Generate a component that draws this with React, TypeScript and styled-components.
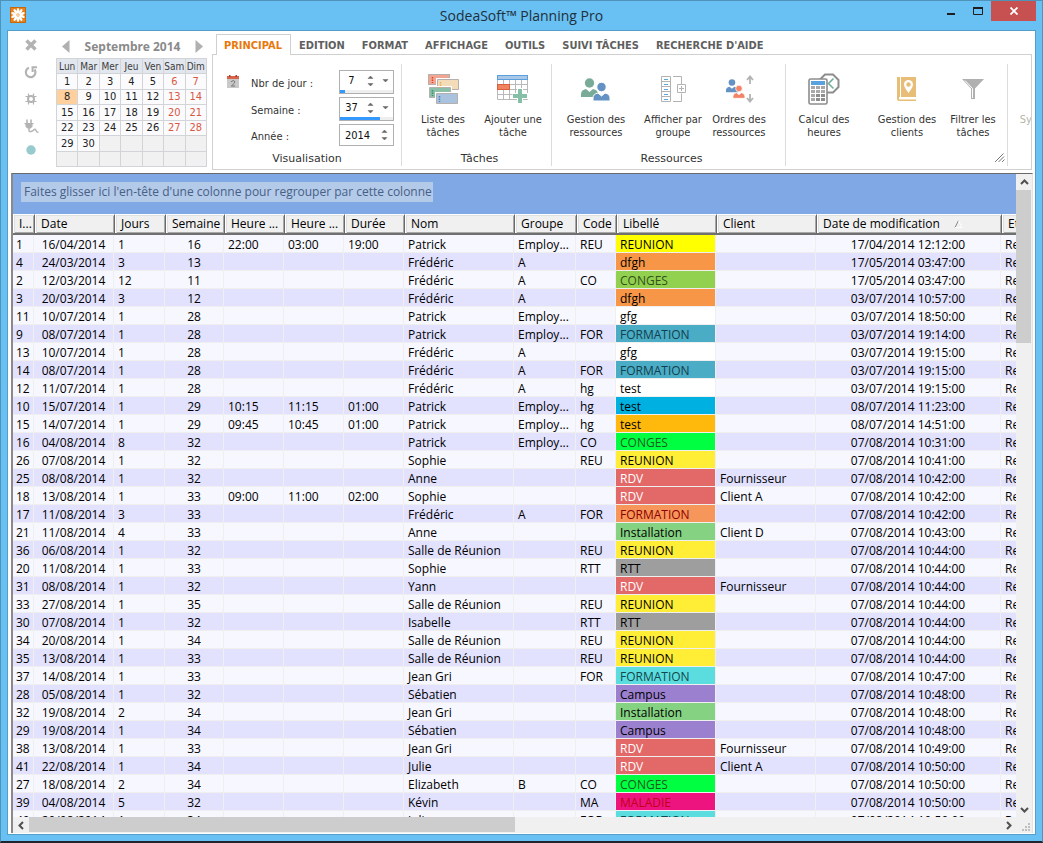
import React from "react";
import styled, { createGlobalStyle } from "styled-components";

const UI_FONT = '"DejaVu Sans Condensed", "DejaVu Sans", sans-serif';
const GRID_FONT = '"Open Sans", "Noto Sans", sans-serif';

const GlobalStyle = createGlobalStyle`
  *, *::before, *::after { box-sizing: border-box; }
  body { margin: 0; background: #20242c; font-family: ${UI_FONT}; font-size: 11px; color: #333; }
  button, input { font: inherit; color: inherit; margin: 0; padding: 0; border: 0; background: none; }
  button { cursor: pointer; }
  svg { display: block; flex: none; }
`;

/* ---------- window frame ---------- */

const Window = styled.div`
  display: flex;
  flex-direction: column;
  height: 100vh;
  min-height: 400px;
  border: 1px solid #4f93b8;
  border-bottom: 2px solid #20242c;
  background: #69c0f2;
`;

const TitleBar = styled.header`
  display: flex;
  align-items: flex-start;
  height: 29px;
  flex: none;
  padding-left: 9px;
`;

const AppIcon = styled.div`
  padding-top: 6px;
  width: 96px;
`;

const Title = styled.h1`
  flex: 1;
  margin: 0;
  text-align: center;
  font: 400 14px/29px ${GRID_FONT};
  color: #1f2f3a;
`;

const WindowButtons = styled.div`
  display: flex;
  width: 100px;
  margin-right: 5px;
`;

const WindowButton = styled.button<{ $close?: boolean }>`
  display: flex;
  align-items: center;
  justify-content: center;
  height: 20px;
  width: ${(p) => (p.$close ? 45 : 27)}px;
  background: ${(p) => (p.$close ? "#c75050" : "transparent")};
`;

const Client = styled.main`
  display: flex;
  flex-direction: column;
  flex: 1;
  min-height: 0;
  margin: 0 6px 6px;
  border: 1px solid #539fc9;
  background: #fff;
`;

/* ---------- top area ---------- */

const TopArea = styled.div`
  display: flex;
  height: 142px;
  flex: none;
  padding-right: 3px;
`;

const SideTools = styled.nav`
  display: flex;
  flex-direction: column;
  align-items: center;
  width: 46px;
  padding-top: 6px;
  gap: 11px;
`;

const ToolButton = styled.button`
  display: flex;
  align-items: center;
  justify-content: center;
  width: 16px;
  height: 16px;
`;

const MonthPanel = styled.section`
  width: 151px;
  margin: 3px 5px 0 2px;
`;

const MonthNav = styled.div`
  display: flex;
  align-items: center;
  justify-content: space-between;
  height: 24px;
  padding: 0 4px 0 6px;
`;

const MonthName = styled.span`
  padding-top: 2px;
  font: 700 12px/24px "Noto Sans", sans-serif;
  color: #8a8a8a;
`;

const MonthTable = styled.table`
  width: 151px;
  height: 109px;
  border-collapse: collapse;
  table-layout: fixed;
  line-height: 13px;
  text-align: center;

  th, td {
    height: 15px;
    padding: 0;
    border: 1px solid #d2d4d8;
    font-weight: 400;
    white-space: nowrap;
  }
  th { background: #e2e6ee; color: #3c3c3c; font-size: 10px; }
`;

const Day = styled.td<{ $weekend: boolean; $today: boolean; $empty: boolean }>`
  color: ${(p) => (p.$weekend ? "#d9583f" : "#222")};
  background: ${(p) => (p.$today ? "#ffcf9d" : p.$empty ? "#f1f1f1" : "#fbfbfe")};
`;

const Ribbon = styled.section`
  flex: 1;
  min-width: 0;
  display: flex;
  flex-direction: column;
  padding-top: 3px;
`;

const Tabs = styled.div`
  display: flex;
  padding-left: 4px;
  height: 21px;
  flex: none;
`;

const Tab = styled.button<{ $active?: boolean }>`
  height: 21px;
  padding: 2px 8px 0 7px;
  position: relative;
  z-index: 1;
  font-weight: 700;
  line-height: 18px;
  white-space: nowrap;
  color: ${(p) => (p.$active ? "#e8790c" : "#5f5f5f")};
  background: ${(p) => (p.$active ? "#fff" : "transparent")};
  border: 1px solid ${(p) => (p.$active ? "#d0d0d0" : "transparent")};
  border-bottom: 0;
`;

const RibbonPanel = styled.div`
  display: flex;
  height: 116px;
  margin-top: -1px;
  border: 1px solid #d0d0d0;
  padding: 9px 0 3px;
  overflow: hidden;
`;

const Group = styled.section<{ $width?: number; $indent?: number }>`
  display: flex;
  flex-direction: column;
  justify-content: space-between;
  flex: ${(p) => (p.$width ? `0 0 ${p.$width}px` : "1 0 0")};
  padding-left: ${(p) => p.$indent ?? 0}px;
  border-right: ${(p) => (p.$width ? "1px solid #dcdcdc" : "0")};
`;

const GroupTitle = styled.h2`
  margin: 0;
  font-size: 11px;
  font-weight: 400;
  line-height: 14px;
  text-align: center;
  font-family: "DejaVu Sans", sans-serif;
`;

const GroupItems = styled.div`
  display: flex;
  padding-top: 9px;
`;

const BigButton = styled.button<{ $width: number; $muted?: boolean }>`
  display: flex;
  flex-direction: column;
  align-items: center;
  gap: 8px;
  flex: none;
  width: ${(p) => p.$width}px;
  line-height: 13px;
  color: ${(p) => (p.$muted ? "#b5b5a8" : "#333")};
  white-space: pre;
`;

const LauncherRow = styled.div`
  display: flex;
  justify-content: flex-end;
  height: 14px;
  padding-right: 2px;
`;

const Launcher = styled.button`
  width: 11px;
  height: 12px;
`;

const Fields = styled.div`
  display: grid;
  grid-template-columns: 12px 1fr 55px;
  column-gap: 12px;
  row-gap: 3px;
  align-items: center;
  padding: 6px 7px 0 14px;
`;

const FieldLabel = styled.label`
  grid-column: 2;
  padding-top: 2px;
`;

const SpinBox = styled.div`
  grid-column: 3;
  border: 1px solid #b0b0b0;
  background: #fff;
`;

const SpinLine = styled.div<{ $tall: boolean }>`
  display: flex;
  align-items: center;
  height: ${(p) => (p.$tall ? 20 : 19)}px;
`;

const SpinInput = styled.input<{ $wide?: boolean }>`
  width: ${(p) => (p.$wide ? 35 : 23)}px;
  text-align: center;
  color: #111;
`;

const SpinArrows = styled.span`
  display: flex;
  flex-direction: column;
  gap: 4px;
  margin: 0 auto;
`;

const ArrowButton = styled.button`
  display: block;
  width: 7px;
  height: 4px;
`;

const Gauge = styled.div`
  height: 3px;
  background: #eee;
`;

const GaugeFill = styled.div`
  height: 3px;
  background: #3399ff;
`;

/* ---------- data grid ---------- */

const GridFrame = styled.section`
  display: grid;
  grid-template-columns: 1fr 16px;
  grid-template-rows: 1fr 16px;
  flex: 1;
  min-height: 0;
  margin: 0 2px 1px 3px;
  border-top: 1px solid #696969;
  border-left: 2px solid #8a8a8a;
  border-right: 1px solid #e3e3e3;
  background: #f0f0f0;
  font-family: ${GRID_FONT};
  font-size: 12px;
`;

const GridView = styled.div`
  min-width: 0;
  min-height: 0;
  overflow: hidden;
  background: #fff;
`;

const GroupBar = styled.div`
  height: 40px;
  padding: 8px;
  background: #80a8e4;
`;

const GroupHint = styled.span`
  display: inline-block;
  padding: 0 1px 0 3px;
  line-height: 20px;
  white-space: nowrap;
  color: #466086;
  background: #b4cae9;
`;

const DataTable = styled.table`
  width: 1102px;
  min-width: 100%;
  table-layout: fixed;
  border-collapse: separate;
  border-spacing: 0;
`;

const HeadCell = styled.th`
  height: 21px;
  padding: 0 1px 1px 6px;
  text-align: left;
  font-weight: 400;
  line-height: 16px;
  color: #000;
  background: #f0f0f0;
  border-top: 1px solid #fff;
  border-bottom: 2px solid #707070;
  border-left: 1px solid #696969;
  box-shadow: inset 1px 0 0 #fff, inset 2px 1px 0 #e0e0e0, inset -1px -1px 0 #a8a8a8;
  white-space: nowrap;
  overflow: hidden;
  text-overflow: ellipsis;

  &:first-child { border-left: 0; }
  svg { display: inline-block; margin-left: 14px; }
`;

const Row = styled.tr`
  background: #f7f7ff;
  &:nth-child(even) { background: #e2e2ff; }
`;

const Cell = styled.td<{ $center?: boolean; $bg?: string; $fg?: string }>`
  height: 18px;
  padding: 2px 0 0 ${(p) => (p.$center ? 0 : 4)}px;
  line-height: 15px;
  text-align: ${(p) => (p.$center ? "center" : "left")};
  color: ${(p) => p.$fg ?? "#000"};
  background: ${(p) => p.$bg ?? "transparent"};
  border-right: 1px solid #efefef;
  border-bottom: 1px solid #efefef;
  white-space: nowrap;
  overflow: hidden;

  &:first-child { padding-left: 3px; }
`;

const ScrollBar = styled.div<{ $vertical?: boolean }>`
  display: flex;
  flex-direction: ${(p) => (p.$vertical ? "column" : "row")};
  background: #f0f0f0;
`;

const ScrollButton = styled.button`
  display: flex;
  align-items: center;
  justify-content: center;
  flex: none;
  width: 16px;
  height: 16px;
`;

const ScrollTrack = styled.div`
  flex: 1;
`;

const VThumb = styled.div`
  width: 15px;
  height: 25%;
  background: #cdcdcd;
`;

const HThumb = styled.div`
  width: 50%;
  height: 15px;
  background: #cdcdcd;
`;

const Grip = styled.div`
  display: flex;
  align-items: flex-end;
  justify-content: flex-end;
  padding: 2px;
`;

/* ---------- icons ---------- */

const FlowerIcon = () => (
  <svg width="16" height="16" viewBox="0 0 16 16">
    <rect width="16" height="16" fill="#e6821e" />
    <rect x="0.5" y="0.5" width="15" height="15" fill="none" stroke="#c96808" />
    {[0, 36, 72, 108, 144, 180, 216, 252, 288, 324].map((a) => (
      <ellipse key={a} cx="8" cy="3.8" rx="1.3" ry="2.9" fill="#fff" transform={`rotate(${a} 8 8)`} />
    ))}
    <circle cx="8" cy="8" r="1.3" fill="#f9cf9a" />
  </svg>
);

const CrossIcon = () => (
  <svg width="12" height="12" viewBox="0 0 12 12">
    <path d="M1.5 1.5l9 9M10.5 1.5l-9 9" stroke="#b3b3b3" strokeWidth="3.4" />
  </svg>
);

const ReloadIcon = () => (
  <svg width="14" height="13" viewBox="0 0 14 13">
    <path d="M5 1.8A4.8 4.8 0 1 0 10.5 3.5" fill="none" stroke="#b3b3b3" strokeWidth="2.2" />
    <path d="M7.5 1.2h5.500M8.600 1v5" fill="none" stroke="#b3b3b3" strokeWidth="2" />
  </svg>
);

const HashIcon = () => (
  <svg width="12" height="12" viewBox="0 0 12 12">
    <path d="M3.500 0.500v11M8.500 0.500v11M0.500 3.500h11M0.500 8.500h11" stroke="#b3b3b3" strokeWidth="1.200" />
    <circle cx="6" cy="6" r="3" fill="#fff" stroke="#b3b3b3" strokeWidth="2" />
  </svg>
);

const PlugIcon = () => (
  <svg width="15" height="15" viewBox="0 0 15 15">
    <path d="M3 0.5v4M7 0.5v4" stroke="#b3b3b3" strokeWidth="1.6" />
    <path d="M0.5 4h9v1.2h-1v2.5L6.5 9.5h-3L1.5 7.7V5.2h-1z" fill="#b3b3b3" />
    <path d="M5 9v2.5q0 1.5 2 1t3-1.8 2 .8 2.5 1.8" fill="none" stroke="#b3b3b3" strokeWidth="1.4" />
  </svg>
);

const DotIcon = () => (
  <svg width="10" height="10" viewBox="0 0 10 10">
    <circle cx="5" cy="5" r="4.7" fill="#97cbce" />
  </svg>
);

const Triangle = ({ dir }: { dir: "left" | "right" }) => (
  <svg width="8" height="13" viewBox="0 0 8 13">
    <path d={dir === "left" ? "M7.5 0v13L0 6.5z" : "M0.5 0v13L8 6.5z"} fill="#b0b0b0" />
  </svg>
);

const SmallArrow = ({ up }: { up?: boolean }) => (
  <svg width="7" height="4" viewBox="0 0 7 4">
    <path d={up ? "M1 3.5L3.5 1 6 3.5z" : "M1 .5L3.5 3 6 .5z"} fill="#666" stroke="#666" strokeWidth="0.5" />
  </svg>
);

const CalendarIcon = () => (
  <svg width="12" height="14" viewBox="0 0 12 14">
    <path d="M0 1h12v3H0z" fill="#d9644c" />
    <path d="M2 0h1.5v2H2zM8.5 0H10v2H8.5z" fill="#a33f2c" />
    <path d="M0 4h12v9H0z" fill="#c9c9c9" />
    <path d="M4.200 7.200q.3-1.500 1.900-1.500 1.700 0 1.700 1.500 0 1-3.500 3.800h3.900" fill="none" stroke="#777" />
  </svg>
);

const TaskListIcon = () => (
  <svg width="32" height="32" viewBox="0 0 32 32">
    <g strokeWidth="1" stroke="#b5b0ad">
      <rect x="1.5" y="1.5" width="21" height="10" fill="#f2a592" />
      <path d="M10.500 6.500h21v10h-21z" fill="#f4dcb8" stroke="#fff" strokeWidth="3" />
      <path d="M10.500 6.500h21v10h-21z" fill="#f4dcb8" />
      <path d="M2.500 14.500h21v10h-21z" fill="#8abfa8" stroke="#fff" strokeWidth="3" />
      <path d="M2.500 14.500h21v10h-21z" fill="#8abfa8" />
      <path d="M9.500 20.500h21v10h-21z" fill="#a9c3df" stroke="#fff" strokeWidth="3" />
      <path d="M9.500 20.500h21v10h-21z" fill="#a9c3df" />
    </g>
    <path d="M5.500 4v6" stroke="#e0402a" strokeWidth="1.5" strokeDasharray="1.5 1" />
    <path d="M13.500 9v6" stroke="#e0ad5c" strokeWidth="1.5" strokeDasharray="1.5 1" />
    <path d="M5.500 17v6" stroke="#3c8f6c" strokeWidth="1.5" strokeDasharray="1.5 1" />
    <path d="M12.500 23v6" stroke="#4a83c0" strokeWidth="1.5" strokeDasharray="1.5 1" />
  </svg>
);

const AddTaskIcon = () => (
  <svg width="32" height="32" viewBox="0 0 32 32">
    <path d="M.5 6v20.5h30V6M6.5 6v20.5M12.5 6v20.5M18.5 6v20.5M24.5 6v20.5M.5 11.5h30M.5 16.5h30M.5 21.5h30" fill="none" stroke="#b9b9b9" />
    <rect x="0.5" y="2.5" width="30" height="4" fill="#a9c7e6" stroke="#5ba0dc" />
    <rect x="0.5" y="11.5" width="12" height="5" fill="#f0845f" stroke="#d9603c" />
    <path d="M23 15v15M15.5 23h16" stroke="#fff" strokeWidth="6" />
    <path d="M23 16v14M16 23h14" stroke="#86bfa8" strokeWidth="4" />
  </svg>
);

const Person = ({ x, y, s, fill }: { x: number; y: number; s: number; fill: string }) => (
  <g transform={`translate(${x} ${y}) scale(${s})`}>
    <circle cx="8.5" cy="5" r="4.7" fill={fill} />
    <path d="M0 19v-3q0-4 5-5l3.5 3 3.5-3q5 1 5 5v3z" fill={fill} />
  </g>
);

const PeopleIcon = () => (
  <svg width="32" height="32" viewBox="0 0 32 32">
    <Person x={1} y={5} s={1} fill="#7aab98" />
    <g stroke="#fff" strokeWidth="1">
      <Person x={13} y={9} s={1} fill="#6592c4" />
    </g>
  </svg>
);

const GroupByIcon = () => (
  <svg width="32" height="32" viewBox="0 0 32 32">
    <g fill="none" stroke="#b3b3b3">
      <path d="M4.5 3.5h9v25h-9zM4.5 8.5h9M4.5 13.5h9M4.5 18.5h9M4.5 23.5h9M16 3.5h8.5v8M16 28.5h8.5v-8M20.5 11.5h8v8h-8zM22 15.5h5M24.5 13v5" />
      <path d="M7 6.5h4M7 11.5h4M7 16.5h4M7 21.5h4M7 26.5h4" stroke="#5ba5dc" />
    </g>
  </svg>
);

const OrderIcon = () => (
  <svg width="32" height="32" viewBox="0 0 32 32">
    <Person x={3} y={6} s={0.7} fill="#6592c4" />
    <g stroke="#fff" strokeWidth="1">
      <Person x={10} y={12} s={0.7} fill="#f28366" />
    </g>
    <path d="M27 11V4M24 7l3-3.5L30 7M27 21v7M24 25l3 3.5 3-3.5" fill="none" stroke="#b3b3b3" strokeWidth="1.8" />
  </svg>
);

const CalcIcon = () => (
  <svg width="32" height="32" viewBox="0 0 32 32">
    <path d="M17 1.5h8l5.5 5.5v7L25 19.5h-8L11.5 14V7z" fill="#fff" stroke="#8d8d8d" strokeWidth="2" />
    <path d="M25.5 5.5l-5 5 5 5" fill="none" stroke="#6fb09b" strokeWidth="1.6" />
    <rect x="1" y="6" width="18" height="25" rx="1.5" fill="#fff" stroke="#8d8d8d" strokeWidth="1.6" />
    <rect x="3" y="8" width="14" height="4" fill="#5aa2dd" />
    {[13, 17, 21, 25].map((y) =>
      [3, 8, 13].map((x) => <rect key={`${x}-${y}`} x={x} y={y} width="4" height="3" fill={y > 20 && x > 4 ? "#8d8d8d" : "#a8a8a8"} />)
    )}
  </svg>
);

const BookIcon = () => (
  <svg width="32" height="32" viewBox="0 0 32 32">
    <path d="M6 4h19v20H8v2.5h17V28H8q-2 0-2-2z" fill="#e8bd77" />
    <path d="M9.500 4v20" stroke="#fff" strokeWidth="1" />
    <path d="M17.500 7a4.500 4.500 0 0 1 4.500 4.500q0 2.500-4.500 8.500-4.500-6-4.500-8.500a4.500 4.500 0 0 1 4.500-4.500z" fill="#fff" />
    <circle cx="17.500" cy="11.500" r="2.200" fill="#e8bd77" />
  </svg>
);

const FunnelIcon = () => (
  <svg width="32" height="32" viewBox="0 0 32 32">
    <path d="M5 6h22l-9 9.500V26h-4V15.500z" fill="#b0b0b0" />
    <path d="M8 7.500l7.500 8V25" fill="none" stroke="#fff" strokeWidth="1" />
  </svg>
);

const Chevron = ({ dir }: { dir: "up" | "down" | "left" | "right" }) => {
  const angle = { up: 0, right: 90, down: 180, left: 270 }[dir];
  return (
    <svg width="9" height="9" viewBox="0 0 9 9">
      <path d="M1 6l3.5-3.5L8 6" fill="none" stroke="#505050" strokeWidth="2" transform={`rotate(${angle} 4.5 4.5)`} />
    </svg>
  );
};

/* ---------- data ---------- */

const WEEK = ["Lun", "Mar", "Mer", "Jeu", "Ven", "Sam", "Dim"];

const COLUMNS: [string, number][] = [
  ["ID", 21], ["Date", 80], ["Jours", 51], ["Semaine", 59], ["Heure de début", 60],
  ["Heure de fin", 60], ["Durée", 60], ["Nom", 110], ["Groupe", 62], ["Code", 40],
  ["Libellé", 100], ["Client", 100], ["Date de modification", 185], ["Etat", 114],
];

const KINDS: Record<string, { text: string; bg: string; fg?: string }> = {
  reu0: { text: "REUNION", bg: "#ffff00" },
  dfgh: { text: "dfgh", bg: "#f79646" },
  con0: { text: "CONGES", bg: "#92d050", fg: "#33501a" },
  gfg: { text: "gfg", bg: "#ffffff" },
  for0: { text: "FORMATION", bg: "#4bacc6", fg: "#12404d" },
  test: { text: "test", bg: "#ffffff" },
  test1: { text: "test", bg: "#00b0e0" },
  test2: { text: "test", bg: "#ffb80c" },
  con: { text: "CONGES", bg: "#00ff40", fg: "#1b5a1f" },
  reu: { text: "REUNION", bg: "#ffee35" },
  rdv: { text: "RDV", bg: "#e36868", fg: "#ffffff" },
  for1: { text: "FORMATION", bg: "#f6965a", fg: "#8b0000" },
  ins: { text: "Installation", bg: "#86d283" },
  rtt: { text: "RTT", bg: "#9e9e9e" },
  for: { text: "FORMATION", bg: "#5bdde0", fg: "#12484b" },
  cam: { text: "Campus", bg: "#9b80d0" },
  mal: { text: "MALADIE", bg: "#ee1480", fg: "#c00018" },
};

// id | date | days | week | start | end | duration | name | group | code | kind | client | modified
const ROWS = `1|16/04/2014|1|16|22:00|03:00|19:00|Patrick|Employ...|REU|reu0||17/04/2014 12:12:00
4|24/03/2014|3|13||||Frédéric|A||dfgh||17/05/2014 03:47:00
2|12/03/2014|12|11||||Frédéric|A|CO|con0||17/05/2014 03:47:00
3|20/03/2014|3|12||||Frédéric|A||dfgh||03/07/2014 10:57:00
11|10/07/2014|1|28||||Patrick|Employ...||gfg||03/07/2014 18:50:00
9|08/07/2014|1|28||||Patrick|Employ...|FOR|for0||03/07/2014 19:14:00
13|10/07/2014|1|28||||Frédéric|A||gfg||03/07/2014 19:15:00
14|08/07/2014|1|28||||Frédéric|A|FOR|for0||03/07/2014 19:15:00
12|11/07/2014|1|28||||Frédéric|A|hg|test||03/07/2014 19:15:00
10|15/07/2014|1|29|10:15|11:15|01:00|Patrick|Employ...|hg|test1||08/07/2014 11:23:00
15|14/07/2014|1|29|09:45|10:45|01:00|Patrick|Employ...|hg|test2||08/07/2014 14:51:00
16|04/08/2014|8|32||||Patrick|Employ...|CO|con||07/08/2014 10:31:00
26|07/08/2014|1|32||||Sophie||REU|reu||07/08/2014 10:41:00
25|08/08/2014|1|32||||Anne|||rdv|Fournisseur|07/08/2014 10:42:00
18|13/08/2014|1|33|09:00|11:00|02:00|Sophie|||rdv|Client A|07/08/2014 10:42:00
17|11/08/2014|3|33||||Frédéric|A|FOR|for1||07/08/2014 10:42:00
21|11/08/2014|4|33||||Anne|||ins|Client D|07/08/2014 10:43:00
36|06/08/2014|1|32||||Salle de Réunion||REU|reu||07/08/2014 10:44:00
20|11/08/2014|1|33||||Sophie||RTT|rtt||07/08/2014 10:44:00
31|08/08/2014|1|32||||Yann|||rdv|Fournisseur|07/08/2014 10:44:00
33|27/08/2014|1|35||||Salle de Réunion||REU|reu||07/08/2014 10:44:00
30|07/08/2014|1|32||||Isabelle||RTT|rtt||07/08/2014 10:44:00
34|20/08/2014|1|34||||Salle de Réunion||REU|reu||07/08/2014 10:44:00
35|13/08/2014|1|33||||Salle de Réunion||REU|reu||07/08/2014 10:44:00
37|14/08/2014|1|33||||Jean Gri||FOR|for||07/08/2014 10:47:00
28|05/08/2014|1|32||||Sébatien|||cam||07/08/2014 10:48:00
32|19/08/2014|2|34||||Jean Gri|||ins||07/08/2014 10:48:00
29|19/08/2014|1|34||||Sébatien|||cam||07/08/2014 10:48:00
38|13/08/2014|1|33||||Jean Gri|||rdv|Fournisseur|07/08/2014 10:49:00
41|22/08/2014|1|34||||Julie|||rdv|Client A|07/08/2014 10:50:00
27|18/08/2014|2|34||||Elizabeth|B|CO|con||07/08/2014 10:50:00
39|04/08/2014|5|32||||Kévin||MA|mal||07/08/2014 10:50:00
40|20/08/2014|1|34||||Julie||FOR|for||07/08/2014 10:50:00`
  .split("\n")
  .map((line) => line.split("|"));

const CENTERED = [1, 3, 12];
const KIND_COLUMN = 10;

/* ---------- parts ---------- */

const MonthCalendar = () => (
  <MonthPanel>
    <MonthNav>
      <button aria-label="Mois précédent"><Triangle dir="left" /></button>
      <MonthName>Septembre 2014</MonthName>
      <button aria-label="Mois suivant"><Triangle dir="right" /></button>
    </MonthNav>
    <MonthTable>
      <thead>
        <tr>{WEEK.map((d) => <th key={d}>{d}</th>)}</tr>
      </thead>
      <tbody>
        {[0, 1, 2, 3, 4, 5].map((w) => (
          <tr key={w}>
            {WEEK.map((d, i) => {
              const n = w * 7 + i + 1;
              return (
                <Day key={d} $weekend={i > 4} $today={n === 8} $empty={n > 30}>
                  {n <= 30 ? n : ""}
                </Day>
              );
            })}
          </tr>
        ))}
      </tbody>
    </MonthTable>
  </MonthPanel>
);

const SpinField = ({ id, label, value, fill }: { id: string; label: string; value: string; fill?: number }) => (
  <>
    <FieldLabel htmlFor={id}>{label}</FieldLabel>
    <SpinBox>
      <SpinLine $tall={fill === undefined}>
        <SpinInput id={id} defaultValue={value} $wide={fill === undefined} />
        <SpinArrows>
          <ArrowButton aria-label="Augmenter"><SmallArrow up /></ArrowButton>
          <ArrowButton aria-label="Diminuer"><SmallArrow /></ArrowButton>
        </SpinArrows>
        {fill !== undefined && (
          <SpinArrows><ArrowButton aria-label="Choisir"><SmallArrow /></ArrowButton></SpinArrows>
        )}
      </SpinLine>
      {fill !== undefined && <Gauge><GaugeFill style={{ width: `${fill}%` }} /></Gauge>}
    </SpinBox>
  </>
);

const TABS = ["PRINCIPAL", "EDITION", "FORMAT", "AFFICHAGE", "OUTILS", "SUIVI TÂCHES", "RECHERCHE D'AIDE"];

export default function App() {
  return (
    <Window>
      <GlobalStyle />
      <TitleBar>
        <AppIcon><FlowerIcon /></AppIcon>
        <Title>SodeaSoft™ Planning Pro</Title>
        <WindowButtons>
          <WindowButton aria-label="Réduire">
            <svg width="8" height="8"><path d="M0 6h8v2H0z" fill="#1e1e1e" /></svg>
          </WindowButton>
          <WindowButton aria-label="Agrandir">
            <svg width="10" height="8"><path d="M.5 1.5h9v6h-9z" fill="none" stroke="#1e1e1e" /><path d="M0 0h10v2H0z" fill="#1e1e1e" /></svg>
          </WindowButton>
          <WindowButton $close aria-label="Fermer">
            <svg width="8" height="8"><path d="M.5 .5l7 7M7.5 .5l-7 7" stroke="#fff" strokeWidth="1.8" /></svg>
          </WindowButton>
        </WindowButtons>
      </TitleBar>

      <Client>
        <TopArea>
          <SideTools>
            <ToolButton aria-label="Fermer le planning"><CrossIcon /></ToolButton>
            <ToolButton aria-label="Actualiser"><ReloadIcon /></ToolButton>
            <ToolButton aria-label="Paramètres"><HashIcon /></ToolButton>
            <ToolButton aria-label="Connexion"><PlugIcon /></ToolButton>
            <DotIcon />
          </SideTools>
          <MonthCalendar />
          <Ribbon>
            <Tabs>
              {TABS.map((t, i) => <Tab key={t} $active={i === 0}>{t}</Tab>)}
            </Tabs>
            <RibbonPanel>
              <Group $width={189}>
                <Fields>
                  <CalendarIcon />
                  <SpinField id="days" label="Nbr de jour :" value="7" fill={9} />
                  <SpinField id="week" label="Semaine :" value="37" fill={75} />
                  <SpinField id="year" label="Année :" value="2014" />
                </Fields>
                <GroupTitle>Visualisation</GroupTitle>
              </Group>
              <Group $width={150} $indent={6}>
                <GroupItems>
                  <BigButton $width={70}><TaskListIcon />{"Liste des\ntâches"}</BigButton>
                  <BigButton $width={70}><AddTaskIcon />{"Ajouter une\ntâche"}</BigButton>
                </GroupItems>
                <GroupTitle>Tâches</GroupTitle>
              </Group>
              <Group $width={234} $indent={6}>
                <GroupItems>
                  <BigButton $width={76}><PeopleIcon />{"Gestion des\nressources"}</BigButton>
                  <BigButton $width={78}><GroupByIcon />{"Afficher par\ngroupe"}</BigButton>
                  <BigButton $width={54}><OrderIcon />{"Ordres des\nressources"}</BigButton>
                </GroupItems>
                <GroupTitle>Ressources</GroupTitle>
              </Group>
              <Group $width={222}>
                <GroupItems>
                  <BigButton $width={76}><CalcIcon />{"Calcul des\nheures"}</BigButton>
                  <BigButton $width={90}><BookIcon />{"Gestion des\nclients"}</BigButton>
                  <BigButton $width={42}><FunnelIcon />{"Filtrer les\ntâches"}</BigButton>
                </GroupItems>
                <LauncherRow>
                  <Launcher aria-label="Options du groupe">
                    <svg width="11" height="10"><path d="M1 9L9.5 .5M4.5 9L10 3.5M8 9l2.5-2.5" stroke="#777" /></svg>
                  </Launcher>
                </LauncherRow>
              </Group>
              <Group $indent={6}>
                <GroupItems>
                  <BigButton $width={76} $muted>
                    <svg width="32" height="32" />{"Synchroniser"}
                  </BigButton>
                </GroupItems>
              </Group>
            </RibbonPanel>
          </Ribbon>
        </TopArea>

        <GridFrame>
          <GridView>
            <GroupBar>
              <GroupHint>Faites glisser ici l'en-tête d'une colonne pour regrouper par cette colonne</GroupHint>
            </GroupBar>
            <DataTable>
              <colgroup>
                {COLUMNS.map(([name, width]) => <col key={name} style={{ width }} />)}
              </colgroup>
              <thead>
                <tr>
                  {COLUMNS.map(([name], i) => (
                    <HeadCell key={name}>
                      {i === 0 ? "I..." : i === 4 || i === 5 ? "Heure ..." : name}
                      {i === 12 && (
                        <svg width="9" height="8"><path d="M1 7.5L4.5 .5" stroke="#888" /><path d="M4.5 .5L8 7.5H1" fill="none" stroke="#fff" /></svg>
                      )}
                    </HeadCell>
                  ))}
                </tr>
              </thead>
              <tbody>
                {ROWS.map((row) => (
                  <Row key={row[0]}>
                    {row.map((value, i) => {
                      if (i === KIND_COLUMN) {
                        const kind = KINDS[value];
                        return <Cell key={i} $bg={kind.bg} $fg={kind.fg}>{kind.text}</Cell>;
                      }
                      return <Cell key={i} $center={CENTERED.includes(i)}>{value}</Cell>;
                    })}
                    <Cell>Realisé</Cell>
                  </Row>
                ))}
              </tbody>
            </DataTable>
          </GridView>
          <ScrollBar $vertical>
            <ScrollButton aria-label="Défiler vers le haut"><Chevron dir="up" /></ScrollButton>
            <ScrollTrack><VThumb /></ScrollTrack>
            <ScrollButton aria-label="Défiler vers le bas"><Chevron dir="down" /></ScrollButton>
          </ScrollBar>
          <ScrollBar>
            <ScrollButton aria-label="Défiler vers la gauche"><Chevron dir="left" /></ScrollButton>
            <ScrollTrack><HThumb /></ScrollTrack>
            <ScrollButton aria-label="Défiler vers la droite"><Chevron dir="right" /></ScrollButton>
          </ScrollBar>
          <Grip>
            <svg width="8" height="8"><path d="M6 0h2v2H6zM3 3h2v2H3zM6 3h2v2H6zM0 6h2v2H0zM3 6h2v2H3zM6 6h2v2H6z" fill="#bfbfbf" /></svg>
          </Grip>
        </GridFrame>
      </Client>
    </Window>
  );
}
